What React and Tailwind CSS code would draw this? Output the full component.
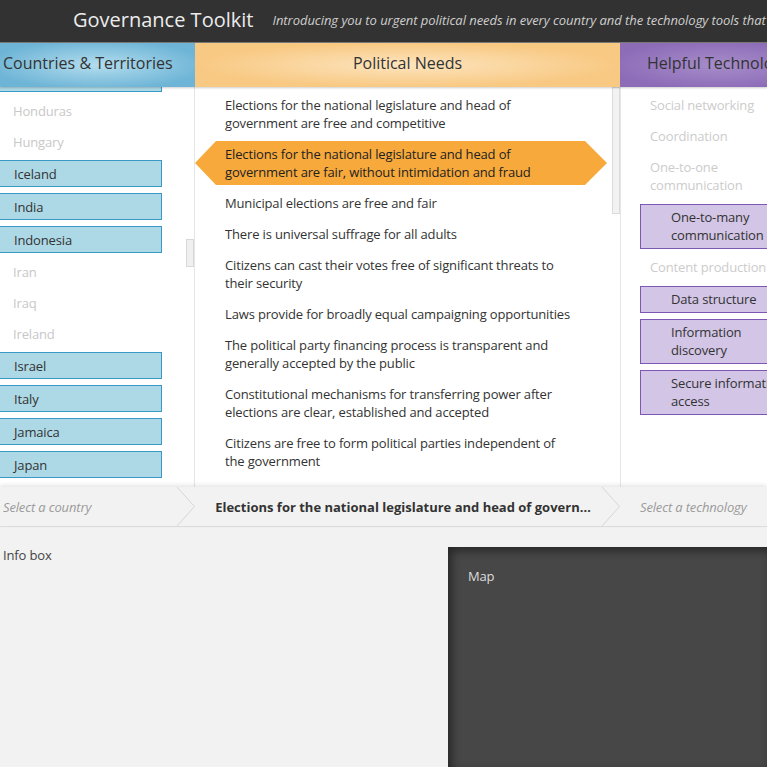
const countries = [
  { name: 'Haiti', on: true },
  { name: 'Honduras' },
  { name: 'Hungary' },
  { name: 'Iceland', on: true },
  { name: 'India', on: true },
  { name: 'Indonesia', on: true },
  { name: 'Iran' },
  { name: 'Iraq' },
  { name: 'Ireland' },
  { name: 'Israel', on: true },
  { name: 'Italy', on: true },
  { name: 'Jamaica', on: true },
  { name: 'Japan', on: true },
  { name: 'Jordan' },
  { name: 'Kazakhstan', on: true },
];

const needs = [
  { text: 'Elections for the national legislature and head of government are free and competitive' },
  { text: 'Elections for the national legislature and head of government are fair, without intimidation and fraud', on: true },
  { text: 'Municipal elections are free and fair' },
  { text: 'There is universal suffrage for all adults' },
  { text: 'Citizens can cast their votes free of significant threats to their security' },
  { text: 'Laws provide for broadly equal campaigning opportunities' },
  { text: 'The political party financing process is transparent and generally accepted by the public' },
  { text: 'Constitutional mechanisms for transferring power after elections are clear, established and accepted' },
  { text: 'Citizens are free to form political parties independent of the government' },
  { text: 'Opposition parties have a realistic possibility of gaining power through elections' },
];

const technologies = [
  { name: 'Social networking' },
  { name: 'Coordination' },
  { name: 'One-to-one communication' },
  { name: 'One-to-many communication', on: true },
  { name: 'Content production' },
  { name: 'Data structure', on: true },
  { name: 'Information discovery', on: true },
  { name: 'Secure information access', on: true },
];

const Chevron = () => (
  <svg width="18" height="39" viewBox="0 0 18 39" className="shrink-0">
    <polyline points="0,0 17.5,19.5 0,39" fill="none" stroke="#d6d6d6" strokeWidth="1" />
  </svg>
);

const App = () => {
  return (
    <div className="w-[767px] h-[767px] overflow-hidden flex flex-col bg-white font-['Open_Sans',sans-serif] text-[13px] leading-[18px] tracking-[-0.15px] text-[#333]">
      {/* Top bar */}
      <div className="h-[43px] shrink-0 bg-[#323232] border-b border-[#7a7a7a] flex items-center pl-[73px] pb-[2px] whitespace-nowrap">
        <span className="text-[20px] leading-[26px] tracking-normal text-[#ececec]">Governance Toolkit</span>
        <span className="ml-[19px] italic tracking-[-0.05px] text-[#cfcfcf]">
          Introducing you to urgent political needs in every country and the technology tools that can help
        </span>
      </div>

      {/* Column headers */}
      <div className="relative z-10 h-[44px] shrink-0 flex text-[16px] tracking-normal pb-[4px] shadow-[0_1px_2px_rgba(0,0,0,0.2)]">
        <div className="w-[195px] shrink-0 flex items-center pl-[3px] -mb-[4px] pb-[4px] bg-[radial-gradient(ellipse_at_center,#b4ddee_0%,#6db4d6_80%)]">
          Countries &amp; Territories
        </div>
        <div className="w-[425px] shrink-0 flex items-center justify-center -mb-[4px] pb-[4px] bg-[radial-gradient(ellipse_at_center,#fde4be_0%,#f8c983_70%)]">
          Political Needs
        </div>
        <div className="w-[195px] shrink-0 flex items-center pl-[27px] -mb-[4px] pb-[4px] whitespace-nowrap bg-[radial-gradient(ellipse_at_center,#a68dca_0%,#8c6bb7_80%)]">
          Helpful Technologies
        </div>
      </div>

      {/* Column bodies */}
      <div className="h-[400px] shrink-0 flex overflow-hidden">
        {/* Countries */}
        <div className="w-[195px] shrink-0 flex border-r border-[#e6e6e6]">
          <div className="flex-1 overflow-hidden">
            <div className="flex flex-col -mt-[25px]">
              {countries.map((c) =>
                c.on ? (
                  <div
                    key={c.name}
                    className="my-[3px] h-[27px] -ml-px w-[163px] border border-[#3a98c6] bg-[#add8e6] pl-[14px] flex items-center"
                  >
                    {c.name}
                  </div>
                ) : (
                  <div key={c.name} className="h-[31px] pl-[13px] flex items-center text-[#c8c8c8]">
                    {c.name}
                  </div>
                )
              )}
            </div>
          </div>
          <div className="w-[8px] shrink-0">
            <div className="mt-[152px] h-[28px] bg-[#f0f0f0] border border-[#d8d8d8]" />
          </div>
        </div>

        {/* Political needs */}
        <div className="w-[425px] shrink-0 flex">
          <div className="flex-1 overflow-hidden flex flex-col pt-[2.5px]">
            {needs.map((n) => (
              <div
                key={n.text}
                className={
                  n.on
                    ? 'mr-[5px] my-[2.5px] py-[4px] pl-[30px] pr-[31px] text-[#222] bg-[#f7a93c] [clip-path:polygon(21px_0,calc(100%_-_22px)_0,100%_50%,calc(100%_-_22px)_100%,21px_100%,0_50%)]'
                    : 'mr-[5px] my-[2.5px] py-[4px] pl-[30px] pr-[31px]'
                }
              >
                {n.text}
              </div>
            ))}
          </div>
          <div className="w-[8px] shrink-0">
            <div className="h-[127px] bg-[#f2f2f2] border border-[#dcdcdc]" />
          </div>
        </div>

        {/* Technologies */}
        <div className="w-[195px] shrink-0 border-l border-[#e6e6e6] flex flex-col pt-[2.5px]">
          {technologies.map((t) =>
            t.on ? (
              <div
                key={t.name}
                className="ml-[19px] w-[161px] my-[3px] py-[3.5px] pl-[30px] pr-[10px] border border-[#7d57b3] bg-[#d2c5e5]"
              >
                {t.name}
              </div>
            ) : (
              <div key={t.name} className="py-[6.5px] pl-[29px] pr-[30px] text-[#cccccc]">
                {t.name}
              </div>
            )
          )}
        </div>
      </div>

      {/* Breadcrumb bar */}
      <div className="relative z-10 h-[40px] shrink-0 flex bg-[#f2f2f2] border-b border-[#dcdcdc] shadow-[0_-2px_4px_rgba(0,0,0,0.1)] whitespace-nowrap">
        <div className="w-[195px] shrink-0 flex items-center">
          <span className="flex-1 pl-[3px] italic text-[#9a9a9a]">Select a country</span>
          <Chevron />
        </div>
        <div className="w-[425px] shrink-0 flex items-center">
          <span className="flex-1 pl-[9px] text-center font-bold tracking-normal text-[#333]">
            Elections for the national legislature and head of govern…
          </span>
          <Chevron />
        </div>
        <div className="w-[195px] shrink-0 flex items-center pl-[20px] italic text-[#9a9a9a]">
          Select a technology
        </div>
      </div>

      {/* Info box and map */}
      <div className="flex-1 flex bg-[#f2f2f2]">
        <div className="w-[448px] shrink-0 pl-[3px] pt-[19px] text-[#444]">Info box</div>
        <div className="flex-1 mt-[20px] bg-[#474747] pl-[20px] pt-[20px] text-[#dddddd] shadow-[inset_4px_4px_8px_rgba(0,0,0,0.45)]">
          Map
        </div>
      </div>
    </div>
  );
};

export default App;
